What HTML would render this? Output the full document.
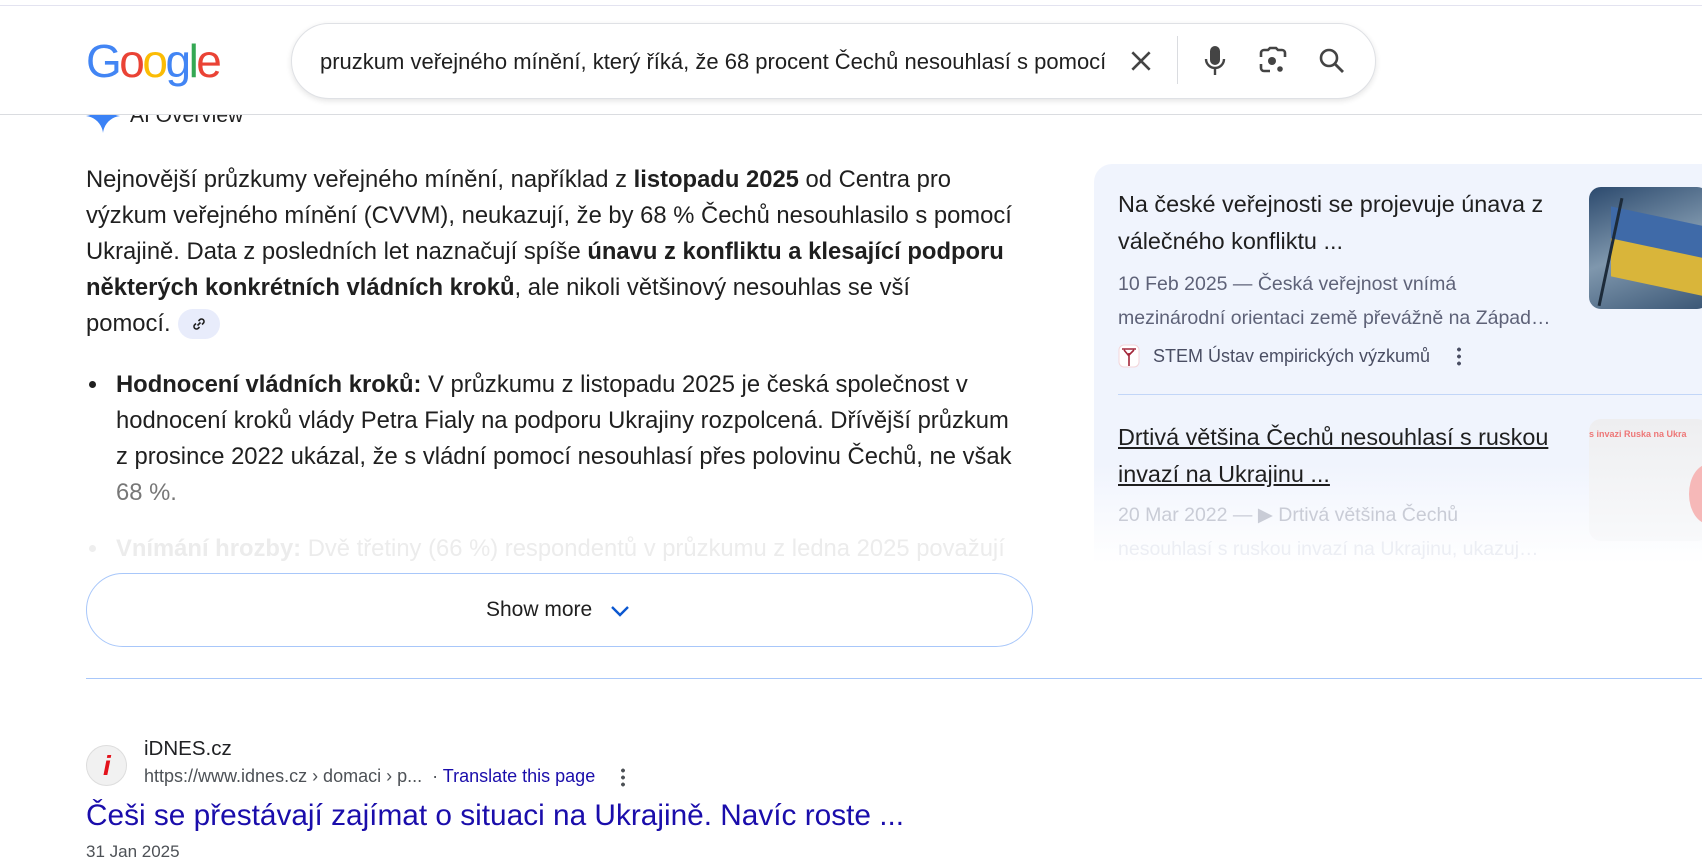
<!DOCTYPE html>
<html><head><meta charset="utf-8"><style>
*{margin:0;padding:0;box-sizing:border-box}
body{width:1702px;height:851px;overflow:hidden;background:#fff;font-family:"Liberation Sans",Arial,sans-serif;color:#1f1f1f;position:relative}
.a{position:absolute;white-space:nowrap}
.t{font-size:23.8px;line-height:36px;color:#1f1f1f}
b{font-weight:bold}
</style></head><body>
<div class="a" style="left:0;top:5px;width:1702px;height:1px;background:#e3e3f0"></div>
<div class="a" style="left:86px;top:29px;font-size:46px;letter-spacing:-2.5px;line-height:64px"><span style="color:#4285f4">G</span><span style="color:#ea4335">o</span><span style="color:#fbbc05">o</span><span style="color:#4285f4">g</span><span style="color:#34a853">l</span><span style="color:#ea4335">e</span></div>
<div class="a" style="left:291px;top:23px;width:1085px;height:76px;border-radius:38px;border:1px solid #dfe1e5;box-shadow:0 2px 6px rgba(32,33,36,.12);background:#fff"></div>
<div class="a" style="left:320px;top:48px;font-size:22px;line-height:28px;color:#1f1f1f;width:785px;overflow:hidden">pruzkum veřejného mínění, který říká, že 68 procent Čechů nesouhlasí s pomocí</div>
<svg class="a" style="left:1128px;top:48px" width="26" height="26" viewBox="0 0 24 24"><path d="M4 4L20 20M20 4L4 20" stroke="#444" stroke-width="2.4" fill="none"/></svg>
<div class="a" style="left:1177px;top:36px;width:1px;height:48px;background:#dadce0"></div>
<svg class="a" style="left:1202px;top:44px" width="26" height="34" viewBox="0 0 26 34"><rect x="8" y="2" width="10" height="19" rx="5" fill="#444"/><path d="M4 15a9 9 0 0 0 18 0" stroke="#444" stroke-width="2.4" fill="none"/><path d="M13 24v7" stroke="#444" stroke-width="2.4"/></svg>
<svg class="a" style="left:1258px;top:46px" width="30" height="30" viewBox="0 0 30 30"><path d="M3 11V7a3 3 0 0 1 3-3h4l2-2h6l2 2h4a3 3 0 0 1 3 3v4M3 18v4a3 3 0 0 0 3 3h6" stroke="#444" stroke-width="2.6" fill="none"/><circle cx="14" cy="15" r="4" fill="#444"/><circle cx="22" cy="23" r="2.8" fill="#444"/></svg>
<svg class="a" style="left:1317px;top:46px" width="30" height="30" viewBox="0 0 30 30"><circle cx="12" cy="12" r="8" stroke="#444" stroke-width="2.6" fill="none"/><path d="M18 18l8 8" stroke="#444" stroke-width="2.8"/></svg>
<div class="a" style="left:0;top:115px;width:1702px;height:736px;overflow:hidden">
 <svg class="a" style="left:86px;top:-16px" width="34" height="34" viewBox="0 0 34 34"><path d="M17 0C18 9 25 16 34 17C25 18 18 25 17 34C16 25 9 18 0 17C9 16 16 9 17 0Z" fill="#3b82f6"/></svg>
 <div class="a" style="left:130px;top:-13px;font-size:21px;line-height:28px;color:#1f1f1f">AI Overview</div>
</div>
<div class="a" style="left:0;top:114px;width:1702px;height:1px;background:#dadce0"></div>
<div class="a t" style="left:86px;top:162px">Nejnovější průzkumy veřejného mínění, například z <b>listopadu 2025</b> od Centra pro</div>
<div class="a t" style="left:86px;top:198px">výzkum veřejného mínění (CVVM), neukazují, že by 68 % Čechů nesouhlasilo s pomocí</div>
<div class="a t" style="left:86px;top:234px">Ukrajině. Data z posledních let naznačují spíše <b>únavu z konfliktu a klesající podporu</b></div>
<div class="a t" style="left:86px;top:270px"><b>některých konkrétních vládních kroků</b>, ale nikoli většinový nesouhlas se vší</div>
<div class="a t" style="left:86px;top:306px">pomocí.</div>
<div class="a" style="left:178px;top:309px;width:42px;height:30px;border-radius:15px;background:#e8ecfb"></div>
<svg class="a" style="left:190px;top:315px" width="18" height="18" viewBox="0 0 18 18"><path d="M7.5 10.5l3-3M6 8.5L4.5 10a2.5 2.5 0 0 0 3.5 3.5L9.5 12M12 9.5l1.5-1.5A2.5 2.5 0 0 0 10 4.5L8.5 6" stroke="#1f1f1f" stroke-width="1.6" fill="none"/></svg>
<div class="a" style="left:89px;top:381px;width:7px;height:7px;border-radius:50%;background:#1f1f1f"></div>
<div class="a t" style="left:116px;top:367px"><b>Hodnocení vládních kroků:</b> V průzkumu z listopadu 2025 je česká společnost v</div>
<div class="a t" style="left:116px;top:403px">hodnocení kroků vlády Petra Fialy na podporu Ukrajiny rozpolcená. Dřívější průzkum</div>
<div class="a t" style="left:116px;top:439px">z prosince 2022 ukázal, že s vládní pomocí nesouhlasí přes polovinu Čechů, ne však</div>
<div class="a t" style="left:116px;top:475px;color:#777">68 %.</div>
<div class="a" style="left:89px;top:545px;width:7px;height:7px;border-radius:50%;background:#eee"></div>
<div class="a t" style="left:116px;top:531px;color:#ececec"><b>Vnímání hrozby:</b> Dvě třetiny (66 %) respondentů v průzkumu z ledna 2025 považují</div>
<div class="a" style="left:86px;top:573px;width:947px;height:74px;border-radius:37px;border:1px solid #a8c7fa;background:#fff"></div>
<div class="a" style="left:486px;top:596px;font-size:21px;line-height:28px;color:#1f1f1f">Show more</div>
<svg class="a" style="left:609px;top:600px" width="22" height="22" viewBox="0 0 22 22"><path d="M3 7l8 8 8-8" stroke="#0b57d0" stroke-width="2.4" fill="none"/></svg>
<div class="a" style="left:86px;top:678px;width:1616px;height:1px;background:#a8c7fa"></div>
<div class="a" style="left:1094px;top:164px;width:640px;height:420px;border-radius:18px;background:linear-gradient(#f0f4fd 0,#f0f4fd 300px,#fff 400px)"></div>
<div class="a" style="left:1118px;top:186px;font-size:23.4px;line-height:37px;color:#1f1f1f">Na české veřejnosti se projevuje únava z<br>válečného konfliktu ...</div>
<div class="a" style="left:1118px;top:267px;font-size:19.5px;line-height:34px;color:#5e6278">10 Feb 2025 — Česká veřejnost vnímá<br>mezinárodní orientaci země převážně na Západ…</div>
<svg class="a" style="left:1118px;top:344px" width="22" height="24" viewBox="0 0 22 24"><rect x="1" y="1" width="20" height="22" rx="5" fill="#fff" stroke="#f3d6da"/><path d="M11 22V9M11 12L6 6M11 11l5-5M4 5h14" stroke="#a3273a" stroke-width="1.6" fill="none"/></svg>
<div class="a" style="left:1153px;top:343px;font-size:18px;line-height:26px;color:#4a4e63">STEM Ústav empirických výzkumů</div>
<div class="a" style="left:1457px;top:346px;width:4px;height:20px;background:radial-gradient(circle,#4a4e63 1.8px,transparent 2px) 0 0/4px 7px repeat-y"></div>
<div class="a" style="left:1589px;top:187px;width:120px;height:122px;border-radius:12px;overflow:hidden;background:linear-gradient(160deg,#2c4a6e,#7f97ad 50%,#3a5675)">
 <div style="position:absolute;left:22px;top:30px;width:100px;height:40px;background:#3f6aa8;transform:skewY(12deg)"></div>
 <div style="position:absolute;left:22px;top:62px;width:100px;height:38px;background:#d9b53a;transform:skewY(12deg)"></div>
 <div style="position:absolute;left:20px;top:10px;width:3px;height:110px;background:#1d2b3a;transform:rotate(12deg)"></div>
</div>
<div class="a" style="left:1118px;top:394px;width:584px;height:1px;background:#c2d6f8"></div>
<div class="a" style="left:1118px;top:419px;font-size:23.4px;line-height:37px;color:#1f1f1f;text-decoration:underline">Drtivá většina Čechů nesouhlasí s ruskou<br>invazí na Ukrajinu ...</div>
<div class="a" style="left:1118px;top:498px;font-size:19.5px;line-height:34px;color:#c9ccd6">20 Mar 2022 — ▶ Drtivá většina Čechů</div>
<div class="a" style="left:1118px;top:532px;font-size:19.5px;line-height:34px;color:#eceef4">nesouhlasí s ruskou invazí na Ukrajinu, ukazuj…</div>
<div class="a" style="left:1589px;top:419px;width:120px;height:122px;border-radius:12px;background:linear-gradient(#eeeef0,#f8f9fb);overflow:hidden"><div style="position:absolute;left:0;top:10px;font-size:9px;color:#e77;font-weight:bold;white-space:nowrap">s invazi Ruska na Ukra</div><div style="position:absolute;left:100px;top:45px;width:40px;height:60px;border-radius:50%;background:#f6b8b8"></div></div>
<div class="a" style="left:86px;top:745px;width:41px;height:41px;border-radius:50%;background:#f1f1f1;border:1px solid #ddd"></div>
<div class="a" style="left:103px;top:750px;font-size:28px;line-height:32px;color:#e3121b;font-weight:bold;font-style:italic">i</div>
<div class="a" style="left:144px;top:736px;font-size:20.5px;line-height:26px;color:#202124">iDNES.cz</div>
<div class="a" style="left:144px;top:763px;font-size:18px;line-height:26px;color:#4d5156">https://www.idnes.cz › domaci › p...&nbsp; · <span style="color:#1a0dab">Translate this page</span></div>
<div class="a" style="left:621px;top:767px;width:4px;height:20px;background:radial-gradient(circle,#4d5156 1.8px,transparent 2px) 0 0/4px 7px repeat-y"></div>
<div class="a" style="left:86px;top:798px;font-size:29.8px;line-height:36px;color:#1a0dab">Češi se přestávají zajímat o situaci na Ukrajině. Navíc roste ...</div>
<div class="a" style="left:86px;top:842px;font-size:17px;line-height:20px;color:#4d5156">31 Jan 2025</div>
</body></html>
